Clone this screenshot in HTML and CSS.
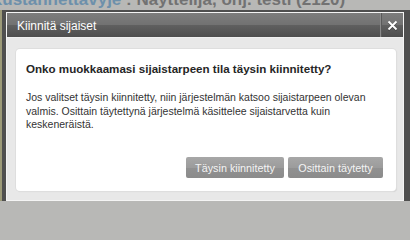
FILE: index.html
```html
<!DOCTYPE html>
<html lang="fi">
<head>
<meta charset="utf-8">
<title>Kiinnitä sijaiset</title>
<link rel="stylesheet" href="styles.css">
</head>
<body>
<div class="page">
  <h1 class="crumb"><span class="crumb-link">Kustannettavyje</span> : Näyttelijä, ohj. testi (2120)</h1>
</div>
<div class="edge"></div>
<div class="dialog">
  <div class="dialog-inner">
    <div class="titlebar">
      <span class="title">Kiinnitä sijaiset</span>
      <button class="close" type="button" aria-label="Sulje">
        <svg width="11" height="11" viewBox="0 0 11 11"><path d="M1.5 1.5 L9.5 9.5 M9.5 1.5 L1.5 9.5" stroke="#fff" stroke-width="1.8" fill="none"/></svg>
      </button>
    </div>
    <div class="dialog-body">
      <div class="card">
        <h2 class="question">Onko muokkaamasi sijaistarpeen tila täysin kiinnitetty?</h2>
        <p class="info">Jos valitset täysin kiinnitetty, niin järjestelmän katsoo sijaistarpeen olevan valmis. Osittain täytettynä järjestelmä käsittelee sijaistarvetta kuin keskeneräistä.</p>
        <div class="actions">
          <button class="btn btn-full" type="button">Täysin kiinnitetty</button>
          <button class="btn btn-part" type="button">Osittain täytetty</button>
        </div>
      </div>
    </div>
  </div>
</div>
</body>
</html>
```
FILE: styles.css
```css
html {
  margin: 0;
  padding: 0;
  height: 201px;
  overflow: hidden;
  background: #b8b8b6;
}
body {
  margin: 0;
  padding: 0;
  width: 410px;
  height: 201px;
  overflow: hidden;
  background: #b8b8b6;
  font-family: "Liberation Sans", Arial, sans-serif;
  position: relative;
}
.crumb {
  margin: -10px 0 0 -10px;
  font-size: 17px;
  font-weight: bold;
  color: #727272;
  white-space: nowrap;
  line-height: 20px;
}
.crumb-link {
  color: #6d90ab;
}
.edge {
  position: absolute;
  left: 0;
  top: 10px;
  width: 2px;
  height: 191px;
  background: #9c9a78;
}
.dialog {
  position: absolute;
  left: 2px;
  top: 10px;
  width: 408px;
  height: 195px;
  box-sizing: border-box;
  background: #4f4f4f;
  padding: 2px 6px 4px 4px;
}
.dialog-inner {
  border: 1px solid #f4f4f4;
  background: #e8e8e8;
  height: 100%;
  box-sizing: border-box;
  display: flex;
  flex-direction: column;
}
.titlebar {
  height: 24px;
  display: flex;
  align-items: stretch;
  background: linear-gradient(#7d7d7d, #727272 48%, #5f5f5f 52%, #4e4e4e);
  border-bottom: 1px solid #f0f0f0;
}
.title {
  flex: 1;
  color: #fff;
  font-size: 12px;
  line-height: 24px;
  padding-left: 10px;
  padding-top: 1px;
}
.close {
  width: 23px;
  border: 0;
  border-left: 1px solid #8a8a8a;
  box-shadow: inset 1px 0 0 #5a5a5a;
  background: transparent;
  padding: 0;
  margin: 0;
  display: flex;
  align-items: center;
  justify-content: center;
}
.close svg {
  filter: drop-shadow(0 1px 0 rgba(0,0,0,0.3));
}
.dialog-body {
  flex: 1;
  padding: 11px 7px 9px 9px;
  display: flex;
}
.card {
  flex: 1;
  background: #fff;
  border-radius: 4px;
  box-shadow: 0 0 0 1px #dedede, 1px 1px 1px #d0d0d0;
  padding: 12px 13px 13px 10px;
  display: flex;
  flex-direction: column;
}
.question {
  margin: 0;
  font-size: 11.6px;
  font-weight: bold;
  color: #262626;
  line-height: 16px;
}
.info {
  margin: 14px 0 0 0;
  font-size: 10.5px;
  color: #333;
  line-height: 13.5px;
}
.actions {
  margin-top: auto;
  display: flex;
  justify-content: flex-end;
  gap: 4px;
}
.btn {
  height: 21px;
  border: 0;
  border-radius: 2px;
  background: linear-gradient(#a7a7a7, #9c9c9c 50%, #919191 52%, #8b8b8b);
  color: #f4f4f4;
  font-family: "Liberation Sans", Arial, sans-serif;
  font-size: 10.8px;
  padding: 0;
  margin: 0;
  white-space: nowrap;
}
.btn-full {
  width: 98px;
}
.btn-part {
  width: 95px;
}
```
